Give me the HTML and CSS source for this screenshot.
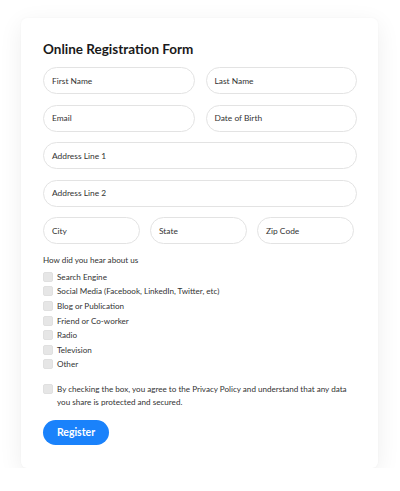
FILE: index.html
```html
<!DOCTYPE html>
<html>
<head>
<meta charset="utf-8">
<link rel="stylesheet" href="styles.css">
</head>
<body>
<div class="page">
  <div class="card">
    <h1 class="title">Online Registration Form</h1>
    <div class="grid2">
      <div class="field">First Name</div>
      <div class="field">Last Name</div>
      <div class="field">Email</div>
      <div class="field">Date of Birth</div>
      <div class="field wide">Address Line 1</div>
      <div class="field wide">Address Line 2</div>
    </div>
    <div class="grid3">
      <div class="field">City</div>
      <div class="field">State</div>
      <div class="field">Zip Code</div>
    </div>
    <div class="question">How did you hear about us</div>
    <ul class="options">
      <li class="opt"><span class="box"></span>Search Engine</li>
      <li class="opt"><span class="box"></span>Social Media (Facebook, LinkedIn, Twitter, etc)</li>
      <li class="opt"><span class="box"></span>Blog or Publication</li>
      <li class="opt"><span class="box"></span>Friend or Co-worker</li>
      <li class="opt"><span class="box"></span>Radio</li>
      <li class="opt"><span class="box"></span>Television</li>
      <li class="opt"><span class="box"></span>Other</li>
    </ul>
    <div class="consent"><span class="box"></span><span class="consent-text">By checking the box, you agree to the Privacy Policy and understand that any data you share is protected and secured.</span></div>
    <button class="btn">Register</button>
  </div>
</div>
</body>
</html>
```
FILE: styles.css
```css
html, body { margin: 0; padding: 0; background: #fff; }
body { font-family: Lato, "Noto Sans", sans-serif; color: #333; }
.page { padding: 18px 0 0 21px; }
.card {
  width: 357px;
  box-sizing: border-box;
  padding: 22px 21px 23px 22px;
  background: #fff;
  border-radius: 6px;
  box-shadow: 0 6px 24px rgba(0,0,0,0.07), 0 0 2px rgba(0,0,0,0.04);
}
.title {
  margin: 0;
  font-size: 13.5px;
  font-weight: 700;
  color: #1a1a1a;
  line-height: 18px;
  height: 18px;
  margin-bottom: 9px;
}
.grid2 {
  display: grid;
  grid-template-columns: 1fr 1fr;
  column-gap: 11px;
  row-gap: 10.5px;
}
.wide { grid-column: 1 / 3; }
.grid3 {
  margin-top: 10.5px;
  display: grid;
  grid-template-columns: 97px 97px 97px;
  column-gap: 10px;
}
.field {
  height: 27px;
  box-sizing: border-box;
  border: 1px solid #e3e3e3;
  border-radius: 14px;
  padding-left: 8px;
  display: flex;
  align-items: center;
  font-size: 8.4px;
  color: #333;
}
.question {
  margin-top: 10px;
  font-size: 8.1px;
  line-height: 12px;
  color: #333;
}
.options { list-style: none; margin: 3.5px 0 0 0; padding: 0; }
.opt {
  display: flex;
  align-items: center;
  height: 14.6px;
  font-size: 8.1px;
  color: #333;
}
.box {
  width: 10px;
  height: 10px;
  border-radius: 2px;
  background: #e6e6e6;
  border: 1px solid #e0e0e0;
  box-sizing: border-box;
  margin-right: 4px;
  flex: none;
}
.consent {
  margin-top: 11px;
  display: flex;
  align-items: flex-start;
  font-size: 8.1px;
  line-height: 13px;
  color: #333;
}
.consent .box { margin-top: 1.5px; }
.consent-text { width: 295px; }
.btn {
  margin-top: 11px;
  display: block;
  width: 66px;
  height: 25px;
  border: 0;
  border-radius: 13px;
  background: #1a82fb;
  color: #fff;
  font-family: Lato, "Noto Sans", sans-serif;
  font-weight: 700;
  font-size: 10.5px;
  padding: 0;
}
```
